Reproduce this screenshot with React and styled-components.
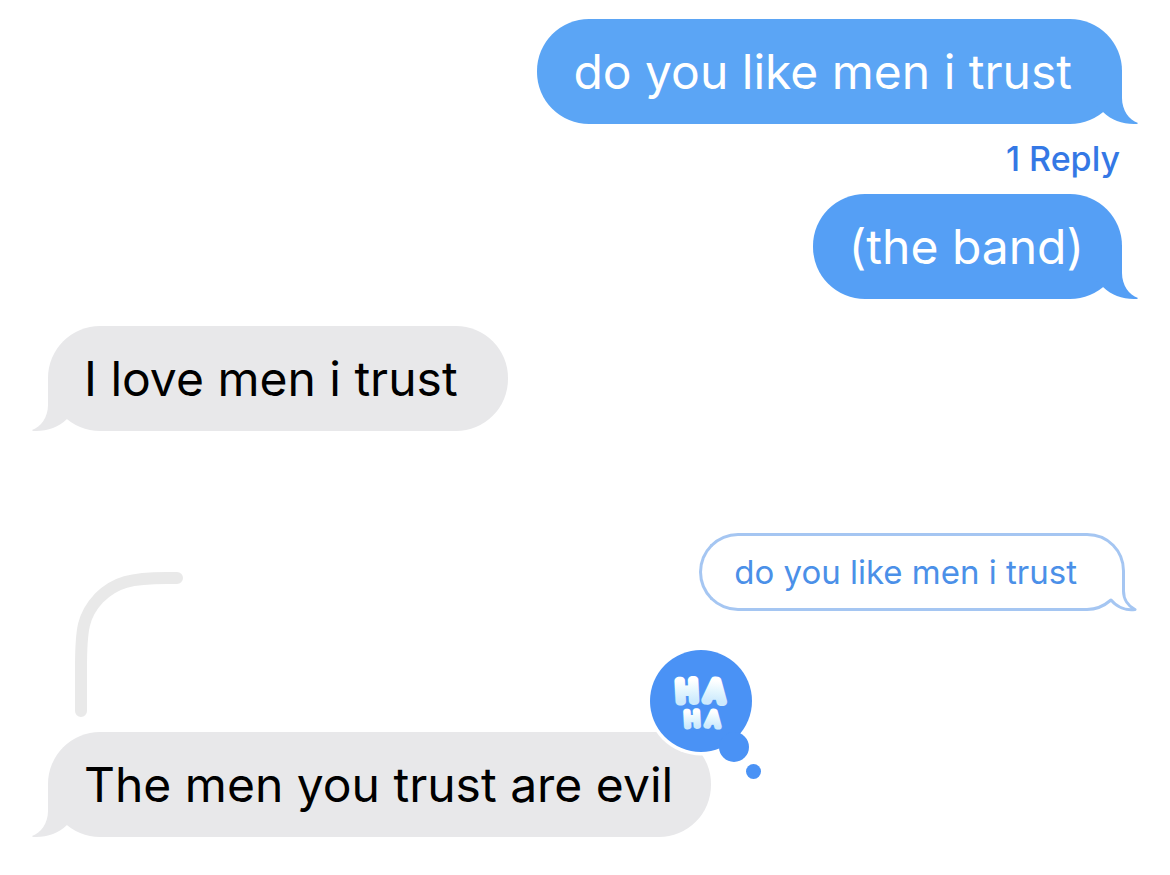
import styled, { createGlobalStyle } from 'styled-components';

const GlobalStyle = createGlobalStyle`
  * {
    box-sizing: border-box;
  }

  body {
    margin: 0;
    background-color: #fff;
    font-family: Inter, 'Liberation Sans', sans-serif;
  }
`;

const Conversation = styled.main`
  display: flex;
  flex-direction: column;
  padding: 19px 48px 38px;
`;

const Bubble = styled.p`
  position: relative;
  display: flex;
  align-items: center;
  align-self: ${p => (p.$sent ? 'flex-end' : 'flex-start')};
  min-height: 105px;
  margin: 0;
  padding: 0 ${p => (p.$roomy ? 50 : 38)}px 0 36px;
  border-radius: 52px;
  font-size: 48px;
  line-height: 60px;
  color: ${p => (p.$sent ? '#fff' : '#000')};
  background-color: ${p => p.$fill};
`;

const TailShape = styled.svg`
  position: absolute;
  bottom: 0;
  ${p => (p.$sent ? 'right: -16px;' : 'left: -16px; transform: scaleX(-1);')}
  width: 52px;
  height: 54px;
  fill: ${p => p.$fill};
`;

const ReplyCount = styled.a`
  align-self: flex-end;
  margin: 15px 2px 15px 0;
  font-size: 34px;
  font-weight: 500;
  line-height: 40px;
  color: #3478e5;
  text-decoration: none;
`;

const Received = styled.section`
  display: flex;
  flex-direction: column;
  margin-top: 27px;
`;

const Thread = styled.section`
  display: flex;
  flex-direction: column;
  gap: 15px;
  margin-top: 102px;
`;

const ThreadStart = styled.div`
  display: flex;
  justify-content: space-between;
  min-height: 184px;
`;

const ThreadLine = styled.svg`
  align-self: flex-end;
  flex: none;
  width: 108px;
  height: 145px;
  margin-left: 27px;
  fill: none;
  stroke: #e9e9e9;
  stroke-width: 12;
  stroke-linecap: round;
`;

const Quote = styled.blockquote`
  display: flex;
  align-self: flex-start;
  margin: 0 -16px 0 0;
`;

const QuoteText = styled.p`
  height: 78px;
  margin: 0;
  padding: 0 8px 0 32px;
  border: 3px solid #a5c6f2;
  border-right: 0;
  border-radius: 39px 0 0 39px;
  font-size: 33px;
  line-height: 73px;
  color: #4b90e8;
`;

const QuoteEnd = styled.svg`
  flex: none;
  width: 53px;
  height: 79px;
  fill: none;
  stroke: #a5c6f2;
  stroke-width: 3;
  stroke-linejoin: round;
`;

const Reaction = styled.svg`
  position: absolute;
  top: -86px;
  right: -53px;
  width: 118px;
  height: 136px;
  font-family: Inter, 'Liberation Sans', sans-serif;
  font-weight: 300;
`;

function Message({ sent, fill = '#e8e8ea', roomy, children, reaction }) {
  return (
    <Bubble $sent={sent} $fill={fill} $roomy={roomy}>
      <TailShape $sent={sent} $fill={fill} viewBox="0 0 52 54" aria-hidden="true">
        <path d="M36 0V28C36 40 43 50 52 53C52 54 50 54 48 54C36 54 25 50 17 42L4 30V0Z" />
      </TailShape>
      {children}
      {reaction}
    </Bubble>
  );
}

function Haha() {
  return (
    <Reaction viewBox="0 0 118 136" role="img" aria-label="Haha">
      <defs>
        <linearGradient id="puff" x1="0" y1="0" x2="0" y2="1">
          <stop offset="0.2" stopColor="#fff" />
          <stop offset="0.5" stopColor="#e4f6fe" />
          <stop offset="0.8" stopColor="#cdeafd" />
        </linearGradient>
      </defs>
      <circle cx="55" cy="55" r="54.500" fill="#fff" />
      <g fill="#4a92f5">
        <circle cx="55" cy="55" r="51" />
        <circle cx="88" cy="101" r="15" />
        <circle cx="107.500" cy="125.500" r="7.500" />
      </g>
      <g
        fill="url(#puff)"
        stroke="url(#puff)"
        strokeLinejoin="round"
        textAnchor="middle"
      >
        <g fontSize="28" strokeWidth="8.500">
          <text x="41" y="55" transform="rotate(-3 41 46)">H</text>
          <text x="69" y="55" transform="rotate(5 69 46)">A</text>
        </g>
        <g fontSize="20" strokeWidth="6">
          <text x="46" y="80" transform="rotate(-3 46 74)">H</text>
          <text x="67" y="80" transform="rotate(5 67 74)">A</text>
        </g>
      </g>
    </Reaction>
  );
}

export default function App() {
  return (
    <>
      <GlobalStyle />
      <Conversation>
        <Message sent roomy fill="#5ba5f5">
          do you like men i trust
        </Message>
        <ReplyCount href="#thread">1 Reply</ReplyCount>
        <Message sent fill="#559ff5">
          (the band)
        </Message>
        <Received>
          <Message roomy>I love men i trust</Message>
        </Received>
        <Thread id="thread">
          <ThreadStart>
            <ThreadLine viewBox="0 0 108 145" aria-hidden="true">
              <path d="M102 6H92C56 6 40 10 24 26C8 43 6 57 6 96V139" />
            </ThreadLine>
            <Quote>
              <QuoteText>do you like men i trust</QuoteText>
              <QuoteEnd viewBox="0 0 53 79" aria-hidden="true">
                <path d="M0 1.500H2C23 1.500 38.500 18 38.500 38V58C38.500 66 43 73 50 76.500C41 78 32 74 26 67C19 73 11 76.500 2 76.500H0" />
              </QuoteEnd>
            </Quote>
          </ThreadStart>
          <Message reaction={<Haha />}>The men you trust are evil</Message>
        </Thread>
      </Conversation>
    </>
  );
}
